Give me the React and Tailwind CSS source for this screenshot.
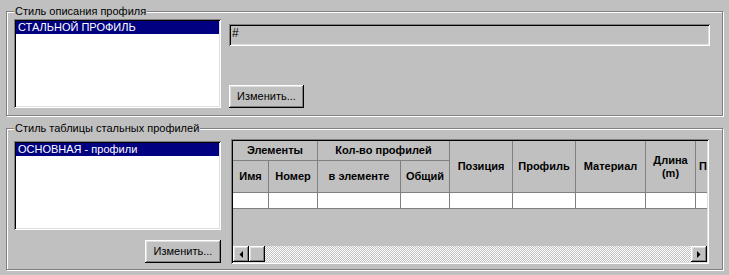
import React from "react";

const raised =
  "shadow-[inset_-1px_-1px_0_#000,inset_1px_1px_0_#fff,inset_-2px_-2px_0_#808080,inset_2px_2px_0_#dfdfdf]";
const sunken =
  "shadow-[inset_1px_1px_0_#808080,inset_-1px_-1px_0_#fff,inset_2px_2px_0_#000,inset_-2px_-2px_0_#dfdfdf]";

function Group({ title, className, children }) {
  return (
    <div
      className={
        "relative border border-[#808080] shadow-[inset_1px_1px_0_#fff,1px_1px_0_#fff] " +
        className
      }
    >
      <span className="absolute left-[7px] top-[-7px] bg-[#c0c0c0] px-px leading-[13px] whitespace-nowrap">
        {title}
      </span>
      {children}
    </div>
  );
}

function Button({ className }) {
  return (
    <div
      className={
        "flex h-[23px] items-center justify-center bg-[#c0c0c0] leading-none " +
        raised +
        " " +
        className
      }
    >
      Изменить...
    </div>
  );
}

function ListBox({ item }) {
  return (
    <div className={"h-[89px] w-[207px] bg-white p-[2px] " + sunken}>
      <div className="h-[13px] bg-[#000080] pl-[2px] leading-[13px] text-white whitespace-nowrap">
        {item}
      </div>
    </div>
  );
}

function HCell({ w, h, children, className = "" }) {
  return (
    <div
      className={
        "flex shrink-0 items-center justify-center border-b border-r border-[#808080] text-center leading-[13px] " +
        className
      }
      style={{ width: w, height: h }}
    >
      {children}
    </div>
  );
}

function DCell({ w }) {
  return (
    <div
      className="h-[16px] shrink-0 border-b border-r border-[#808080] bg-white"
      style={{ width: w }}
    />
  );
}

function Arrow({ dir }) {
  return (
    <div
      className={
        "flex h-[16px] w-[16px] shrink-0 items-center justify-center bg-[#c0c0c0] " +
        raised
      }
    >
      <svg width="4" height="7" viewBox="0 0 4 7">
        {dir === "left" ? (
          <polygon points="4,0 4,7 0.5,3.5" fill="#000" />
        ) : (
          <polygon points="0,0 0,7 3.5,3.5" fill="#000" />
        )}
      </svg>
    </div>
  );
}

export default function App() {
  const cols = [36, 49, 83, 49, 63, 63, 70, 50, 60];
  return (
    <div className="h-[275px] w-[729px] overflow-hidden bg-[#c0c0c0] pl-[6px] pt-[11px] font-['Liberation_Sans',Arial,sans-serif] text-[11px] text-black">
      <Group title="Стиль описания профиля" className="flex h-[105px] w-[717px] pl-[7px] pt-[7px]">
        <ListBox item="СТАЛЬНОЙ ПРОФИЛЬ" />
        <div className="ml-[8px] flex h-[89px] w-[481px] flex-col justify-between pt-[5px]">
          <div className={"h-[22px] bg-[#c0c0c0] pl-[3px] pt-[3px] text-[12px] leading-[13px] " + sunken}>#</div>
          <Button className="w-[75px]" />
        </div>
      </Group>

      <Group
        title="Стиль таблицы стальных профилей"
        className="mt-[12px] flex h-[142px] w-[717px] items-start pl-[7px] pt-[10px]"
      >
        <div className="mt-[2px] flex w-[207px] flex-col">
          <ListBox item="ОСНОВНАЯ - профили" />
          <Button className="mt-[10px] w-[76px] self-end" />
        </div>
        <div className={"ml-[10px] h-[125px] w-[478px] bg-[#c0c0c0] p-[2px] " + sunken}>
          <div className="flex h-full w-full flex-col overflow-hidden">
            <div className="flex h-[52px] font-bold">
              <div className="flex shrink-0 flex-col">
                <HCell w={85} h={20}>Элементы</HCell>
                <div className="flex">
                  <HCell w={36} h={32}>Имя</HCell>
                  <HCell w={49} h={32}>Номер</HCell>
                </div>
              </div>
              <div className="flex shrink-0 flex-col">
                <HCell w={132} h={20}>Кол-во профилей</HCell>
                <div className="flex">
                  <HCell w={83} h={32}>в элементе</HCell>
                  <HCell w={49} h={32}>Общий</HCell>
                </div>
              </div>
              <HCell w={63} h={52}>Позиция</HCell>
              <HCell w={63} h={52}>Профиль</HCell>
              <HCell w={70} h={52}>Материал</HCell>
              <HCell w={50} h={52}>
                Длина
                <br />
                (m)
              </HCell>
              <HCell w={60} h={52} className="justify-start pl-[3px]">
                П
              </HCell>
            </div>
            <div className="flex">
              {cols.map((w, i) => (
                <DCell key={i} w={w} />
              ))}
            </div>
            <div className="flex-1" />
            <div className="flex h-[16px]">
              <Arrow dir="left" />
              <div className={"h-[16px] w-[16px] shrink-0 bg-[#c0c0c0] " + raised} />
              <div className="h-[16px] flex-1 bg-[repeating-conic-gradient(#fff_0_25%,#c0c0c0_0_50%)] bg-size-[2px_2px]" />
              <Arrow dir="right" />
            </div>
          </div>
        </div>
      </Group>
    </div>
  );
}
